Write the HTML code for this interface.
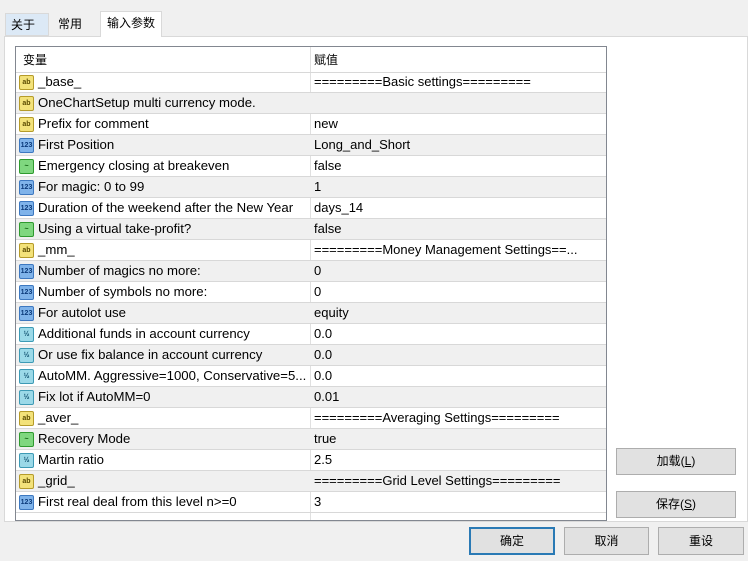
<!DOCTYPE html><html><head><meta charset="utf-8"><style>
*{margin:0;padding:0;box-sizing:border-box}
body{width:748px;height:561px;background:#f0f0f0;font-family:"Liberation Sans","Noto Sans CJK SC",sans-serif;font-size:13px;color:#000;position:relative;overflow:hidden}
.tab{position:absolute;top:13px;height:23px;line-height:22px;padding-left:5px;font-size:12px}
.panel{position:absolute;left:4px;top:36px;width:744px;height:486px;background:#fff;border:1px solid #d9d9d9}
.tbl{position:absolute;left:15px;top:46px;width:592px;height:475px;border:1px solid #828790;background:#fff;overflow:hidden}
.row{position:absolute;left:0;width:590px;height:21px;border-bottom:1px solid #d8d8d8;line-height:20px;white-space:nowrap}
.row.g{background:#f0f0f0}
.c1{position:absolute;left:22px;top:0;font-size:13.2px}
.c2{position:absolute;left:298px;top:0;font-size:13px}
.div{position:absolute;left:294px;top:0;width:1px;height:100%;background:#e0e0e0}
.ic{position:absolute;left:3px;top:3px;width:15px;height:15px;border-radius:2px;font-size:7px;line-height:14px;text-align:center;font-weight:bold;font-style:normal}
.ab{background:#f3e27a;border:1px solid #b59b2a;color:#5a4a00}
.n{background:#7fb3ea;border:1px solid #3d78c0;color:#0b3a7a}
.gr{background:#7fd77f;border:1px solid #2f9a2f;color:#0a5a0a}
.va{background:#9bd9e8;border:1px solid #3d9ab5;color:#0a4a6a}
.btn{position:absolute;background:#e1e1e1;border:1px solid #adadad;text-align:center;font-size:12px}
</style></head><body>
<div class="tab" style="left:5px;width:44px;background:#dce9f6;border:1px solid #d9d9d9">关于</div>
<div class="tab" style="left:53px;width:46px">常用</div>
<div class="panel"></div>
<div class="tab" style="left:100px;width:62px;top:11px;height:26px;background:#fff;border:1px solid #d9d9d9;border-bottom:none;padding-left:6px">输入参数</div>
<div class="tbl">
<div class="div"></div>
<div class="row" style="top:0;height:26px;line-height:26px"><span class="c1" style="left:7px;font-size:12px">变量</span><span class="c2" style="font-size:12px">赋值</span></div>
<div class="row" style="top:25px"><i class="ic ab">ab</i><span class="c1">_base_</span><span class="c2">=========Basic settings=========</span></div>
<div class="row g" style="top:46px"><i class="ic ab">ab</i><span class="c1">OneChartSetup multi currency mode.</span></div>
<div class="row" style="top:67px"><i class="ic ab">ab</i><span class="c1">Prefix for comment</span><span class="c2">new</span></div>
<div class="row g" style="top:88px"><i class="ic n">123</i><span class="c1">First Position</span><span class="c2">Long_and_Short</span></div>
<div class="row" style="top:109px"><i class="ic gr">~</i><span class="c1">Emergency closing at breakeven</span><span class="c2">false</span></div>
<div class="row g" style="top:130px"><i class="ic n">123</i><span class="c1">For magic: 0 to 99</span><span class="c2">1</span></div>
<div class="row" style="top:151px"><i class="ic n">123</i><span class="c1">Duration of the weekend after the New Year</span><span class="c2">days_14</span></div>
<div class="row g" style="top:172px"><i class="ic gr">~</i><span class="c1">Using a virtual take-profit?</span><span class="c2">false</span></div>
<div class="row" style="top:193px"><i class="ic ab">ab</i><span class="c1">_mm_</span><span class="c2">=========Money Management Settings==...</span></div>
<div class="row g" style="top:214px"><i class="ic n">123</i><span class="c1">Number of magics no more:</span><span class="c2">0</span></div>
<div class="row" style="top:235px"><i class="ic n">123</i><span class="c1">Number of symbols no more:</span><span class="c2">0</span></div>
<div class="row g" style="top:256px"><i class="ic n">123</i><span class="c1">For autolot use</span><span class="c2">equity</span></div>
<div class="row" style="top:277px"><i class="ic va">½</i><span class="c1">Additional funds in account currency</span><span class="c2">0.0</span></div>
<div class="row g" style="top:298px"><i class="ic va">½</i><span class="c1">Or use fix balance in account currency</span><span class="c2">0.0</span></div>
<div class="row" style="top:319px"><i class="ic va">½</i><span class="c1">AutoMM. Aggressive=1000, Conservative=5...</span><span class="c2">0.0</span></div>
<div class="row g" style="top:340px"><i class="ic va">½</i><span class="c1">Fix lot if AutoMM=0</span><span class="c2">0.01</span></div>
<div class="row" style="top:361px"><i class="ic ab">ab</i><span class="c1">_aver_</span><span class="c2">=========Averaging Settings=========</span></div>
<div class="row g" style="top:382px"><i class="ic gr">~</i><span class="c1">Recovery Mode</span><span class="c2">true</span></div>
<div class="row" style="top:403px"><i class="ic va">½</i><span class="c1">Martin ratio</span><span class="c2">2.5</span></div>
<div class="row g" style="top:424px"><i class="ic ab">ab</i><span class="c1">_grid_</span><span class="c2">=========Grid Level Settings=========</span></div>
<div class="row" style="top:445px"><i class="ic n">123</i><span class="c1">First real deal from this level n&gt;=0</span><span class="c2">3</span></div>
</div>
<div class="btn" style="left:616px;top:448px;width:120px;height:27px;line-height:25px">加载(<u>L</u>)</div>
<div class="btn" style="left:616px;top:491px;width:120px;height:27px;line-height:25px">保存(<u>S</u>)</div>
<div class="btn" style="left:469px;top:527px;width:86px;height:28px;line-height:24px;border:2px solid #2a7ab5">确定</div>
<div class="btn" style="left:564px;top:527px;width:85px;height:28px;line-height:26px">取消</div>
<div class="btn" style="left:658px;top:527px;width:86px;height:28px;line-height:26px">重设</div>
</body></html>
